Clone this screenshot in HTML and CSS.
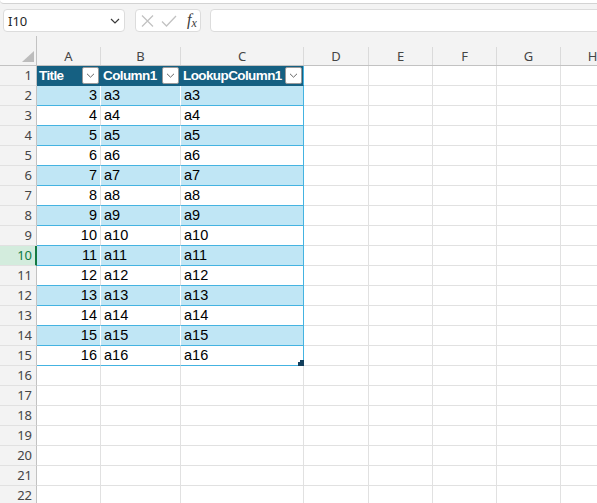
FILE: index.html
```html
<!DOCTYPE html>
<html>
<head>
<meta charset="utf-8">
<link rel="stylesheet" href="styles.css">
</head>
<body>
<div class="edge"></div>
<div class="fbar">
  <div class="namebox"><span>I10</span><svg class="chev" width="10" height="6" viewBox="0 0 10 6"><path d="M1 1 L5 5 L9 1" fill="none" stroke="#3a3a3a" stroke-width="1.2"/></svg></div>
  <div class="fxbox">
    <svg width="13" height="12" viewBox="0 0 13 12"><path d="M1 0.5 L12 11.5 M12 0.5 L1 11.5" stroke="#c2c2c2" stroke-width="1.3" fill="none"/></svg>
    <svg width="16" height="12" viewBox="0 0 16 12"><path d="M1 6.5 L5.5 11 L15 1" stroke="#c2c2c2" stroke-width="1.3" fill="none"/></svg>
    <span class="fx"><i>f</i><sub>x</sub></span>
  </div>
  <div class="finput"></div>
</div>
<div class="sheet">
  <div class="row colhead">
    <div class="corner"><svg width="12" height="11" viewBox="0 0 12 11"><path d="M12 0 L12 11 L0 11 Z" fill="#bcbcbc"/></svg></div>
    <div class="ch">A</div><div class="ch">B</div><div class="ch">C</div><div class="ch">D</div><div class="ch">E</div><div class="ch">F</div><div class="ch">G</div><div class="ch">H</div><div class="ch">I</div>
  </div>
  <div class="row">
    <div class="rh">1</div>
    <div class="c th"><span>Title</span><span class="filter"><svg width="9" height="5" viewBox="0 0 9 5"><path d="M1 0.8 L4.5 4.2 L8 0.8" fill="none" stroke="#666" stroke-width="1"/></svg></span></div>
    <div class="c th"><span>Column1</span><span class="filter"><svg width="9" height="5" viewBox="0 0 9 5"><path d="M1 0.8 L4.5 4.2 L8 0.8" fill="none" stroke="#666" stroke-width="1"/></svg></span></div>
    <div class="c th last"><span>LookupColumn1</span><span class="filter"><svg width="9" height="5" viewBox="0 0 9 5"><path d="M1 0.8 L4.5 4.2 L8 0.8" fill="none" stroke="#666" stroke-width="1"/></svg></span></div>
    <div class="c"></div><div class="c"></div><div class="c"></div><div class="c"></div><div class="c"></div><div class="c"></div>
  </div>
  <div class="row">
    <div class="rh">2</div>
    <div class="c t band num">3</div><div class="c t band">a3</div><div class="c t band last">a3</div>
    <div class="c"></div><div class="c"></div><div class="c"></div><div class="c"></div><div class="c"></div><div class="c"></div>
  </div>
  <div class="row">
    <div class="rh">3</div>
    <div class="c t num">4</div><div class="c t">a4</div><div class="c t last">a4</div>
    <div class="c"></div><div class="c"></div><div class="c"></div><div class="c"></div><div class="c"></div><div class="c"></div>
  </div>
  <div class="row">
    <div class="rh">4</div>
    <div class="c t band num">5</div><div class="c t band">a5</div><div class="c t band last">a5</div>
    <div class="c"></div><div class="c"></div><div class="c"></div><div class="c"></div><div class="c"></div><div class="c"></div>
  </div>
  <div class="row">
    <div class="rh">5</div>
    <div class="c t num">6</div><div class="c t">a6</div><div class="c t last">a6</div>
    <div class="c"></div><div class="c"></div><div class="c"></div><div class="c"></div><div class="c"></div><div class="c"></div>
  </div>
  <div class="row">
    <div class="rh">6</div>
    <div class="c t band num">7</div><div class="c t band">a7</div><div class="c t band last">a7</div>
    <div class="c"></div><div class="c"></div><div class="c"></div><div class="c"></div><div class="c"></div><div class="c"></div>
  </div>
  <div class="row">
    <div class="rh">7</div>
    <div class="c t num">8</div><div class="c t">a8</div><div class="c t last">a8</div>
    <div class="c"></div><div class="c"></div><div class="c"></div><div class="c"></div><div class="c"></div><div class="c"></div>
  </div>
  <div class="row">
    <div class="rh">8</div>
    <div class="c t band num">9</div><div class="c t band">a9</div><div class="c t band last">a9</div>
    <div class="c"></div><div class="c"></div><div class="c"></div><div class="c"></div><div class="c"></div><div class="c"></div>
  </div>
  <div class="row">
    <div class="rh">9</div>
    <div class="c t num">10</div><div class="c t">a10</div><div class="c t last">a10</div>
    <div class="c"></div><div class="c"></div><div class="c"></div><div class="c"></div><div class="c"></div><div class="c"></div>
  </div>
  <div class="row">
    <div class="rh sel">10</div>
    <div class="c t band num">11</div><div class="c t band">a11</div><div class="c t band last">a11</div>
    <div class="c"></div><div class="c"></div><div class="c"></div><div class="c"></div><div class="c"></div><div class="c"></div>
  </div>
  <div class="row">
    <div class="rh">11</div>
    <div class="c t num">12</div><div class="c t">a12</div><div class="c t last">a12</div>
    <div class="c"></div><div class="c"></div><div class="c"></div><div class="c"></div><div class="c"></div><div class="c"></div>
  </div>
  <div class="row">
    <div class="rh">12</div>
    <div class="c t band num">13</div><div class="c t band">a13</div><div class="c t band last">a13</div>
    <div class="c"></div><div class="c"></div><div class="c"></div><div class="c"></div><div class="c"></div><div class="c"></div>
  </div>
  <div class="row">
    <div class="rh">13</div>
    <div class="c t num">14</div><div class="c t">a14</div><div class="c t last">a14</div>
    <div class="c"></div><div class="c"></div><div class="c"></div><div class="c"></div><div class="c"></div><div class="c"></div>
  </div>
  <div class="row">
    <div class="rh">14</div>
    <div class="c t band num">15</div><div class="c t band">a15</div><div class="c t band last">a15</div>
    <div class="c"></div><div class="c"></div><div class="c"></div><div class="c"></div><div class="c"></div><div class="c"></div>
  </div>
  <div class="row">
    <div class="rh">15</div>
    <div class="c t num">16</div><div class="c t">a16</div><div class="c t last corner-cell">a16<svg class="handle" width="6" height="6" viewBox="0 0 6 6"><path d="M2 0 H6 V6 H0 V2 H2 Z" fill="#123f5c"/></svg></div>
    <div class="c"></div><div class="c"></div><div class="c"></div><div class="c"></div><div class="c"></div><div class="c"></div>
  </div>
  <div class="row"><div class="rh">16</div><div class="c"></div><div class="c"></div><div class="c"></div><div class="c"></div><div class="c"></div><div class="c"></div><div class="c"></div><div class="c"></div><div class="c"></div></div>
  <div class="row"><div class="rh">17</div><div class="c"></div><div class="c"></div><div class="c"></div><div class="c"></div><div class="c"></div><div class="c"></div><div class="c"></div><div class="c"></div><div class="c"></div></div>
  <div class="row"><div class="rh">18</div><div class="c"></div><div class="c"></div><div class="c"></div><div class="c"></div><div class="c"></div><div class="c"></div><div class="c"></div><div class="c"></div><div class="c"></div></div>
  <div class="row"><div class="rh">19</div><div class="c"></div><div class="c"></div><div class="c"></div><div class="c"></div><div class="c"></div><div class="c"></div><div class="c"></div><div class="c"></div><div class="c"></div></div>
  <div class="row"><div class="rh">20</div><div class="c"></div><div class="c"></div><div class="c"></div><div class="c"></div><div class="c"></div><div class="c"></div><div class="c"></div><div class="c"></div><div class="c"></div></div>
  <div class="row"><div class="rh">21</div><div class="c"></div><div class="c"></div><div class="c"></div><div class="c"></div><div class="c"></div><div class="c"></div><div class="c"></div><div class="c"></div><div class="c"></div></div>
  <div class="row"><div class="rh">22</div><div class="c"></div><div class="c"></div><div class="c"></div><div class="c"></div><div class="c"></div><div class="c"></div><div class="c"></div><div class="c"></div><div class="c"></div></div>
</div>
</body>
</html>
```

FILE: styles.css
```css
html, body {
  margin: 0;
  padding: 0;
}
body {
  width: 597px;
  height: 503px;
  overflow: hidden;
  background: #f3f3f3;
  font-family: "Noto Sans", "Open Sans", sans-serif;
}
.edge {
  height: 3px;
  background: #ffffff;
  border-bottom: 1px solid #d3d3d3;
  border-bottom-left-radius: 6px;
}
.fbar {
  display: flex;
  height: 22px;
  padding: 5px 0 5px 3px;
}
.namebox {
  width: 122px;
  box-sizing: border-box;
  height: 23px;
  background: #fff;
  border: 1px solid #dcdcdc;
  border-radius: 4px;
  display: flex;
  align-items: center;
  justify-content: space-between;
  padding: 0 4px 0 4px;
  font-size: 13px;
  color: #262626;
}
.fxbox {
  width: 66px;
  box-sizing: border-box;
  height: 23px;
  margin-left: 10px;
  background: #fff;
  border: 1px solid #dcdcdc;
  border-radius: 4px;
  display: flex;
  align-items: center;
  padding: 0 0 0 5px;
  gap: 7px;
}
.fx {
  font-family: "Liberation Serif", serif;
  font-size: 16px;
  color: #3c3c3c;
  line-height: 1;
  margin-left: 3px;
}
.fx sub {
  font-size: 12px;
  font-style: italic;
  vertical-align: -2px;
}
.finput {
  flex: 1;
  height: 23px;
  box-sizing: border-box;
  margin-left: 9px;
  margin-right: -6px;
  background: #fff;
  border: 1px solid #dcdcdc;
  border-radius: 4px;
}
.sheet {
  width: 680px;
}
.row {
  display: grid;
  grid-template-columns: 37px 64px 80px 123px 65px 64px 64px 64px 64px 64px;
}
.colhead {
  height: 30px;
  box-sizing: border-box;
  border-bottom: 1px solid #c2c2c2;
  align-items: end;
}
.corner {
  height: 29px;
  box-sizing: border-box;
  border-right: 1px solid #c2c2c2;
  display: flex;
  align-items: flex-end;
  justify-content: flex-end;
  padding: 0 2px 3px 0;
}
.ch {
  height: 18px;
  box-sizing: border-box;
  border-right: 1px solid #dadada;
  text-align: center;
  font-size: 13px;
  line-height: 18px;
  color: #454545;
}
.rh {
  height: 20px;
  box-sizing: border-box;
  background: #f3f3f3;
  border-right: 1px solid #c2c2c2;
  border-bottom: 1px solid #e1e1e1;
  text-align: right;
  padding-right: 4px;
  font-size: 13px;
  line-height: 19px;
  color: #454545;
}
.rh.sel {
  background: #d3ecdd;
  color: #0f7a3f;
  border-right: 2px solid #137a43;
  padding-right: 3px;
}
.c {
  height: 20px;
  box-sizing: border-box;
  background: #fff;
  border-right: 1px solid #e1e1e1;
  border-bottom: 1px solid #e1e1e1;
  font-family: "Liberation Sans", Arial, sans-serif;
  font-size: 14.5px;
  line-height: 19px;
  color: #000;
  padding: 0 2px 0 3px;
  white-space: nowrap;
  overflow: hidden;
}
.th {
  background: #156082;
  border-right-color: #156082;
  border-bottom-color: #156082;
  color: #fff;
  font-weight: bold;
  font-size: 13.5px;
  letter-spacing: -0.6px;
  display: flex;
  align-items: center;
  justify-content: space-between;
  padding: 0 1px 0 2px;
}
.filter {
  width: 17px;
  height: 17px;
  box-sizing: border-box;
  background: #fff;
  border: 1px solid #9a9a9a;
  border-radius: 2px;
  display: flex;
  align-items: center;
  justify-content: center;
  margin-bottom: 1px;
  flex: none;
}
.t {
  border-bottom-color: #44b3e1;
}
.band {
  background: #c0e6f5;
  border-right-color: #ffffff;
}
.last {
  border-right-color: #44b3e1;
}
.num {
  text-align: right;
  padding: 0 3px 0 2px;
}
.corner-cell {
  position: relative;
  overflow: visible;
}
.handle {
  position: absolute;
  right: -1px;
  bottom: -1px;
}
```
